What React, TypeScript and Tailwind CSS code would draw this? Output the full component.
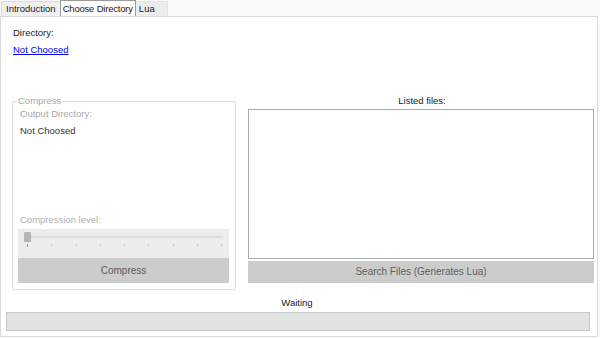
import React from 'react';

const ticks = [0, 1, 2, 3, 4, 5, 6, 7, 8];

export default function App() {
  return (
    <div className="w-[600px] h-[338px] bg-[#fbfbfb] text-[9.5px] leading-[12px] text-[#1a1a1a] font-['Liberation_Sans',Arial,sans-serif] overflow-hidden">
      {/* Tabs */}
      <div className="flex items-end h-[17px] pl-[1px] w-[598px] border-b border-[#dadada]">
        <div className="h-[15px] px-[4px] flex items-center bg-[#f0f0f0] border border-b-0 border-[#dcdcdc]">Introduction</div>
        <div className="h-[16px] px-[2px] flex items-center bg-white border border-b-0 border-[#9a9a9a] -mx-[1px] relative tracking-[-0.2px]">Choose Directory</div>
        <div className="h-[15px] w-[33px] px-[3px] flex items-center bg-[#ececec] border border-b-0 border-[#e2e2e2]">Lua</div>
      </div>

      {/* Pane */}
      <div className="w-[598px] h-[320px] bg-white border border-t-0 border-[#dadada] flex flex-col">
        <div className="pl-[12px] pt-[10px]">Directory:</div>
        <div className="pl-[12px] pt-[5px]">
          <span className="text-[#0000ee] underline">Not Choosed</span>
        </div>

        <div className="flex pl-[11px] pr-[3px] mt-[39px] gap-[12px]">
          {/* Compress group */}
          <fieldset className="w-[224px] h-[195px] border border-[#dcdcdc] rounded-[2px] pl-[5px] pr-[6px] pb-[6px] flex flex-col min-w-0">
            <legend className="-ml-[1px] px-[1px] text-[#a8a8a8]">Compress</legend>
            <div className="pl-[2px] pt-[1px] text-[#a8a8a8]">Output Directory:</div>
            <div className="pl-[2px] pt-[5px] text-[#333]">Not Choosed</div>
            <div className="flex-1" />
            <div className="pl-[2px] pb-[3px] text-[#b0b0b0]">Compression level:</div>
            <div className="h-[29px] bg-[#ececec] px-[6px] pt-[3px] flex flex-col">
              <div className="relative h-[10px] flex items-center">
                <div className="w-full h-[2px] bg-[#dcdcdc]" />
                <div className="absolute left-0 top-0 w-[7px] h-[10px] bg-[#b4b4b4] rounded-[1px]" />
              </div>
              <div className="flex justify-between pt-[2px] pl-[3px] pr-[1px]">
                {ticks.map(t => (
                  <div key={t} className={t === 0 ? 'w-[1px] h-[3px] bg-[#a0a0a0]' : 'w-[1px] h-[2px] bg-[#c4c4c4]'} />
                ))}
              </div>
            </div>
            <div className="h-[25px] bg-[#cccccc] flex items-center justify-center text-[#5a5a5a] text-[10px]">Compress</div>
          </fieldset>

          {/* Listed files */}
          <div className="flex-1 flex flex-col">
            <div className="text-center pl-[2px]">Listed files:</div>
            <div className="h-[150px] mt-[2px] border border-[#a9a9a9] bg-white" />
            <div className="h-[22px] mt-[2px] bg-[#cccccc] flex items-center justify-center text-[#5f5f5f] text-[10px]">Search Files (Generates Lua)</div>
          </div>
        </div>

        <div className="text-center pt-[7px] pr-[4px]">Waiting</div>
        <div className="ml-[5px] mt-[3px] w-[584px] h-[19px] bg-[#e2e2e2] border border-[#c8c8c8]" />
      </div>
    </div>
  );
}
